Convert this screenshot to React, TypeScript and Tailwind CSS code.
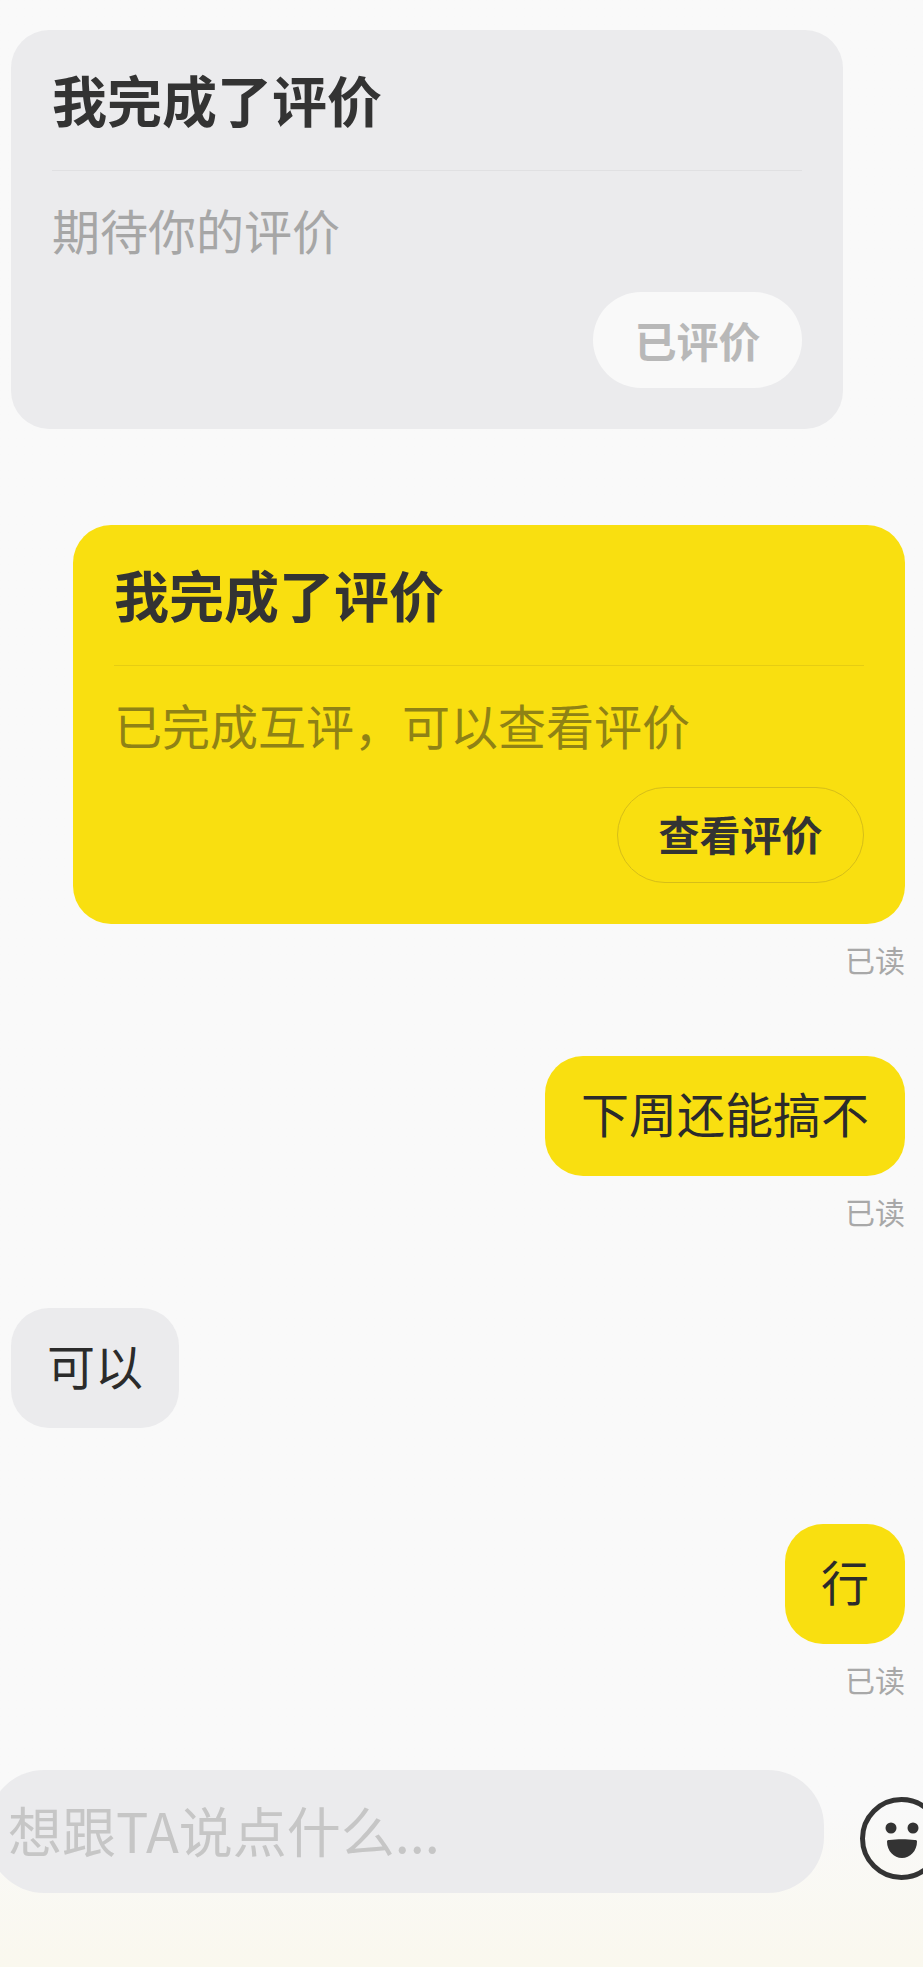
const font = { fontFamily: '"Noto Sans CJK SC", "Noto Sans", sans-serif' };

function Card({ subtitle, action, mine }: { subtitle: string; action: string; mine?: boolean }) {
  return (
    <div className={`w-[832px] rounded-[38px] px-[41px] pt-[38px] pb-[41px] ${mine ? "bg-[#f9df10]" : "bg-[#ebebed]"}`}>
      <h2 className="text-[55px] leading-[60px] font-bold text-[#333333]">我完成了评价</h2>
      <div className={`mt-[42px] h-px ${mine ? "bg-[#e6cd12]" : "bg-[#e0e0e2]"}`} />
      <p className={`mt-[28px] text-[48px] leading-[60px] ${mine ? "text-[#8f8215]" : "text-[#a6a6a6]"}`}>{subtitle}</p>
      <div className="mt-[33px] flex justify-end">
        {mine ? (
          <button className="flex h-[96px] w-[247px] items-center justify-center rounded-full border border-[#d6be18] pb-[2px] text-[41px] font-bold text-[#333333]">{action}</button>
        ) : (
          <button className="flex h-[96px] w-[209px] items-center justify-center rounded-full bg-[#f9f9f9] pb-[2px] text-[42px] font-bold text-[#b8b8b8]">{action}</button>
        )}
      </div>
    </div>
  );
}

function Bubble({ text, mine }: { text: string; mine?: boolean }) {
  return (
    <div className={`flex h-[120px] items-center rounded-[38px] px-[36px] pb-[8px] text-[48px] text-[#2b2b2b] ${mine ? "bg-[#f9df10]" : "bg-[#ebebed]"}`}>
      {text}
    </div>
  );
}

function Read() {
  return <p className="mt-[17px] mb-[2px] text-right text-[30px] leading-[36px] text-[#a8a8a8]">已读</p>;
}

function Smiley() {
  return (
    <svg viewBox="0 0 83 83" className="mt-[27px] ml-[36px] h-[83px] w-[83px] shrink-0">
      <circle cx="41.5" cy="41.5" r="39" fill="none" stroke="#333333" strokeWidth="5" />
      <circle cx="31" cy="31" r="5.5" fill="#333333" />
      <circle cx="53" cy="31" r="5.5" fill="#333333" />
      <path d="M27 44.5C27 43 28 43 29.500 43C37 42 47 42 54.500 43C56 43 57 43 57 44.500C57 54 50 61 42 61C34 61 27 54 27 44.500Z" fill="#333333" />
    </svg>
  );
}

export default function App() {
  return (
    <div style={font} className="h-[1967px] w-[923px] overflow-hidden bg-gradient-to-b from-[#f9f9f9] from-[92%] to-[#faf8ee] pt-[30px]">
      <div className="ml-[11px]">
        <Card subtitle="期待你的评价" action="已评价" />
      </div>

      <div className="mt-[96px] mr-[18px] flex flex-col items-end">
        <Card mine subtitle="已完成互评，可以查看评价" action="查看评价" />
        <Read />
      </div>

      <div className="mt-[77px] mr-[18px] flex flex-col items-end">
        <Bubble mine text="下周还能搞不" />
        <Read />
      </div>

      <div className="mt-[77px] ml-[11px] flex">
        <Bubble text="可以" />
      </div>

      <div className="mt-[96px] mr-[18px] flex flex-col items-end">
        <Bubble mine text="行" />
        <Read />
      </div>

      <div className="mt-[71px] -ml-[12px] flex items-start">
        <div className="flex h-[123px] w-[836px] shrink-0 items-center rounded-[56px] bg-[#ebebed] pb-[4px] pl-[20px] text-[54px] text-[#c6c6c6]">想跟TA说点什么...</div>
        <Smiley />
      </div>
    </div>
  );
}
